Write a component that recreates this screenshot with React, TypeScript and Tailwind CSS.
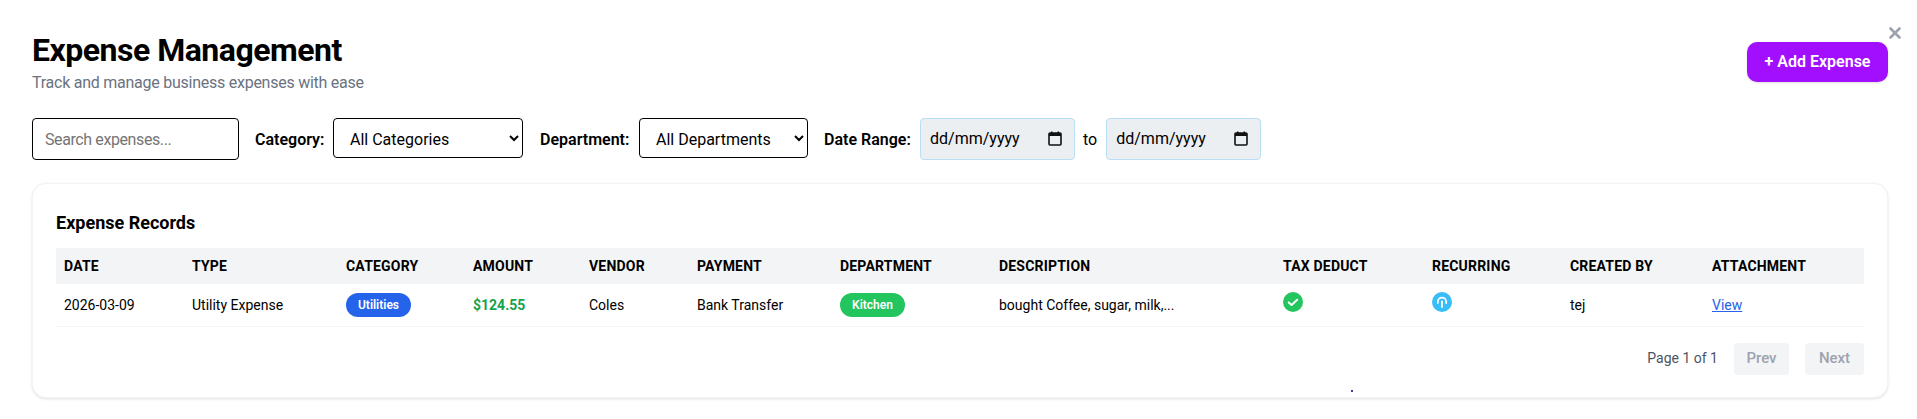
import { X } from "lucide-react";

const columns = [
  { label: "Date", width: "w-[128px]" },
  { label: "Type", width: "w-[154px]" },
  { label: "Category", width: "w-[127px]" },
  { label: "Amount", width: "w-[116px]" },
  { label: "Vendor", width: "w-[108px]" },
  { label: "Payment", width: "w-[143px]" },
  { label: "Department", width: "w-[159px]" },
  { label: "Description", width: "w-[284px]" },
  { label: "Tax Deduct", width: "w-[149px]" },
  { label: "Recurring", width: "w-[138px]" },
  { label: "Created By", width: "w-[142px]" },
  { label: "Attachment", width: "w-[160px]" },
];

const DateField = () => (
  <div className="flex h-[42px] w-[155px] items-center justify-between rounded-[4px] border border-[#b8dff5] bg-[#ebeff2] pl-[9px] pr-[11px] text-[16px] text-black">
    <span>dd/mm/yyyy</span>
    <svg width="16" height="18" viewBox="0 0 16 18" fill="none">
      <rect x="2" y="3" width="12" height="12" rx="1" stroke="#111" strokeWidth="1.6" />
      <rect x="2" y="3" width="12" height="3" fill="#111" />
      <rect x="4" y="1.5" width="1.5" height="2" fill="#111" />
      <rect x="10.5" y="1.5" width="1.5" height="2" fill="#111" />
    </svg>
  </div>
);

export default function App() {
  return (
    <div className="relative h-[419px] w-full overflow-hidden bg-white pl-8 pr-[29px] pt-[30px] font-['Roboto',sans-serif] text-black">
      <button className="absolute right-[13px] top-[24px] text-[#9ca3af]">
        <X size={18} strokeWidth={3.5} />
      </button>

      <div className="mb-[24px] flex items-start justify-between">
        <div>
          <h1 className="text-[32px] font-bold leading-[40px] tracking-[-0.5px]">Expense Management</h1>
          <p className="pt-px text-[16px] leading-[23px] tracking-[-0.25px] text-[#6b7280]">Track and manage business expenses with ease</p>
        </div>
        <button className="mt-3 h-10 w-[141px] rounded-[10px] bg-[#a20fff] text-[16px] font-semibold text-white shadow-sm">
          + Add Expense
        </button>
      </div>

      <div className="mb-[23px] flex items-start text-[16px]">
        <input
          placeholder="Search expenses..."
          className="h-[42px] w-[207px] rounded-[4px] border border-black px-3 text-[16px] tracking-[-0.4px] placeholder:text-[#757575]"
        />
        <label className="ml-4 mt-[10px] w-[70px] font-semibold">Category:</label>
        <select className="ml-2 h-10 w-[190px] rounded-[4px] border border-black bg-white px-3 pt-[2px] text-[16px]">
          <option>All Categories</option>
        </select>
        <label className="ml-[17px] mt-[10px] w-[91px] font-semibold">Department:</label>
        <select className="ml-2 h-10 w-[169px] rounded-[4px] border border-black bg-white px-3 pt-[2px] text-[16px]">
          <option>All Departments</option>
        </select>
        <label className="ml-4 mr-[9px] mt-[10px] w-[87px] font-semibold">Date Range:</label>
        <DateField />
        <span className="ml-2 mr-[9px] mt-[10px]">to</span>
        <DateField />
      </div>

      <div className="relative h-[215px] rounded-[14px] border border-[#f3f4f6] bg-white px-[23px] pt-[25px] shadow-[0_1px_3px_rgba(0,0,0,0.12)]">
        <h2 className="mb-[11px] text-[18px] font-bold leading-[28px]">Expense Records</h2>
        <table className="w-full table-fixed border-collapse text-left text-[14px]">
          <thead>
            <tr className="h-9 bg-[#f3f4f6]">
              {columns.map((c) => (
                <th key={c.label} className={`${c.width} px-2 font-bold uppercase tracking-[0.2px]`}>
                  {c.label}
                </th>
              ))}
            </tr>
          </thead>
          <tbody>
            <tr className="h-[42px] border-b border-[#f3f4f6] align-middle">
              <td className="px-2 pt-[2px]">2026-03-09</td>
              <td className="px-2 pt-[2px]">Utility Expense</td>
              <td className="px-2">
                <span className="inline-flex h-6 w-[65px] items-center justify-center rounded-full bg-[#2563eb] text-[12px] font-semibold text-white">Utilities</span>
              </td>
              <td className="px-2 pt-[2px] font-bold text-[#16a34a]">$124.55</td>
              <td className="px-2 pt-[2px]">Coles</td>
              <td className="px-2 pt-[2px]">Bank Transfer</td>
              <td className="px-2">
                <span className="inline-flex h-6 w-[65px] items-center justify-center rounded-full bg-[#22c55e] text-[12px] font-semibold text-white">Kitchen</span>
              </td>
              <td className="px-2 pt-[2px]">bought Coffee, sugar, milk,...</td>
              <td className="px-2">
                <svg className="mb-[6px] block" width="20" height="20" viewBox="0 0 20 20" fill="none">
                  <circle cx="10" cy="10" r="10" fill="#22c55e" />
                  <path d="M5.7 10.4l2.9 2.5 5.6-5.2" stroke="white" strokeWidth="2" strokeLinecap="round" strokeLinejoin="round" />
                </svg>
              </td>
              <td className="px-2">
                <svg className="mb-[6px] block" width="20" height="20" viewBox="0 0 20 20" fill="none">
                  <circle cx="10" cy="10" r="10" fill="#38bdf8" />
                  <path d="M5.8 11V9.8a4.2 4.2 0 0 1 8.4 0V11" stroke="white" strokeWidth="1.8" strokeLinecap="round" />
                  <path d="M10 9.5V15" stroke="white" strokeWidth="1.8" strokeLinecap="round" />
                </svg>
              </td>
              <td className="px-2 pt-[2px]">tej</td>
              <td className="px-2 pt-[2px]">
                <a href="#" className="text-[#2563eb] underline">View</a>
              </td>
            </tr>
          </tbody>
        </table>
        <div className="mt-4 flex items-center justify-end text-[14px]">
          <span className="mr-[16px] text-[#4b5563]">Page 1 of 1</span>
          <button className="mr-4 h-8 w-[55px] rounded-[4px] bg-[#f3f4f6] text-[15px] font-medium text-[#9ca3af]">Prev</button>
          <button className="h-8 w-[59px] rounded-[4px] bg-[#f3f4f6] text-[15px] font-medium text-[#9ca3af]">Next</button>
        </div>
        <span className="absolute left-[1318px] top-[206px] h-[2px] w-[2px] rounded-full bg-[#00008b]" />
      </div>
    </div>
  );
}
